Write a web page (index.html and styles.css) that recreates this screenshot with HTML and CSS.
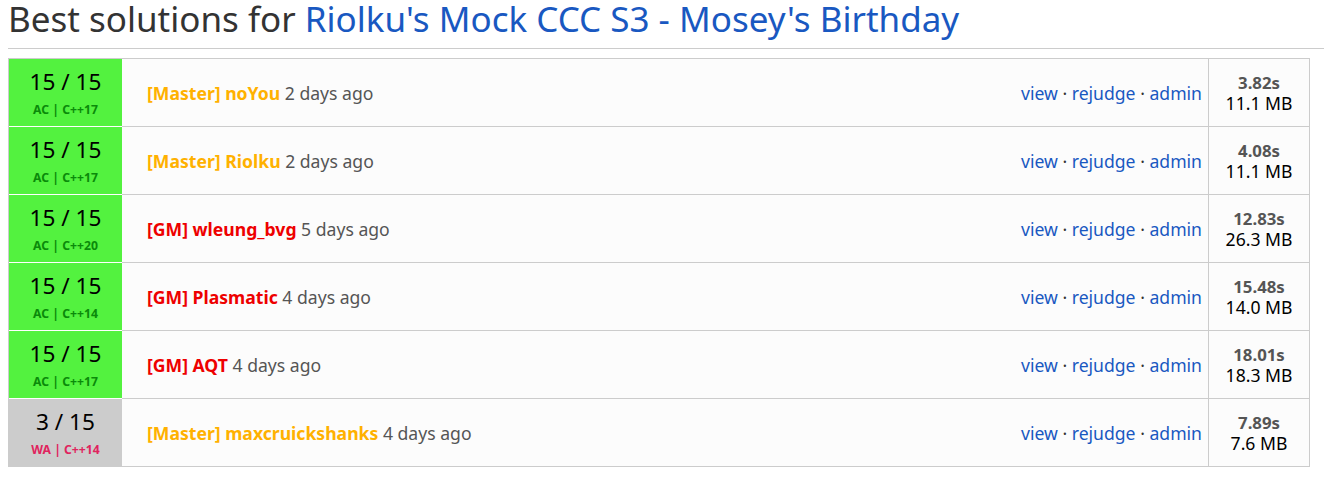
FILE: index.html
```html
<!DOCTYPE html>
<html>
<head>
<meta charset="utf-8">
<link rel="stylesheet" href="styles.css">
</head>
<body>
<h2 class="title">Best solutions for <a href="#">Riolku's Mock CCC S3 - Mosey's Birthday</a></h2>
<hr class="rule">
<div class="submissions">
  <div class="row">
    <div class="result ac"><div class="score">15 / 15</div><div class="state">AC | C++17</div></div>
    <div class="info">
      <div class="who"><span class="user master">[Master] noYou</span> <span class="time">2 days ago</span></div>
      <div class="actions"><a href="#">view</a> · <a href="#">rejudge</a> · <a href="#">admin</a></div>
    </div>
    <div class="res"><div class="t">3.82s</div><div class="m">11.1 MB</div></div>
  </div>
  <div class="row">
    <div class="result ac"><div class="score">15 / 15</div><div class="state">AC | C++17</div></div>
    <div class="info">
      <div class="who"><span class="user master">[Master] Riolku</span> <span class="time">2 days ago</span></div>
      <div class="actions"><a href="#">view</a> · <a href="#">rejudge</a> · <a href="#">admin</a></div>
    </div>
    <div class="res"><div class="t">4.08s</div><div class="m">11.1 MB</div></div>
  </div>
  <div class="row">
    <div class="result ac"><div class="score">15 / 15</div><div class="state">AC | C++20</div></div>
    <div class="info">
      <div class="who"><span class="user gm">[GM] wleung_bvg</span> <span class="time">5 days ago</span></div>
      <div class="actions"><a href="#">view</a> · <a href="#">rejudge</a> · <a href="#">admin</a></div>
    </div>
    <div class="res"><div class="t">12.83s</div><div class="m">26.3 MB</div></div>
  </div>
  <div class="row">
    <div class="result ac"><div class="score">15 / 15</div><div class="state">AC | C++14</div></div>
    <div class="info">
      <div class="who"><span class="user gm">[GM] Plasmatic</span> <span class="time">4 days ago</span></div>
      <div class="actions"><a href="#">view</a> · <a href="#">rejudge</a> · <a href="#">admin</a></div>
    </div>
    <div class="res"><div class="t">15.48s</div><div class="m">14.0 MB</div></div>
  </div>
  <div class="row">
    <div class="result ac"><div class="score">15 / 15</div><div class="state">AC | C++17</div></div>
    <div class="info">
      <div class="who"><span class="user gm">[GM] AQT</span> <span class="time">4 days ago</span></div>
      <div class="actions"><a href="#">view</a> · <a href="#">rejudge</a> · <a href="#">admin</a></div>
    </div>
    <div class="res"><div class="t">18.01s</div><div class="m">18.3 MB</div></div>
  </div>
  <div class="row">
    <div class="result wa"><div class="score">3 / 15</div><div class="state">WA | C++14</div></div>
    <div class="info">
      <div class="who"><span class="user master">[Master] maxcruickshanks</span> <span class="time">4 days ago</span></div>
      <div class="actions"><a href="#">view</a> · <a href="#">rejudge</a> · <a href="#">admin</a></div>
    </div>
    <div class="res"><div class="t">7.89s</div><div class="m">7.6 MB</div></div>
  </div>
</div>
</body>
</html>
```
FILE: styles.css
```css
html, body { margin: 0; padding: 0; background: #fff; }
body {
  padding: 0 0 0 8px;
  font-family: "Noto Sans", "Open Sans", sans-serif;
  color: #000;
}
a { color: #1958c1; text-decoration: none; }
.title {
  margin: 0;
  font-size: 35px;
  font-weight: normal;
  line-height: 38px;
  color: #333;
  white-space: nowrap;
}
.rule {
  margin: 10px 0 9px 0;
  border: 0;
  border-top: 1px solid #ccc;
  height: 0;
}
.submissions {
  width: 1302px;
  border-top: 1px solid #ccc;
}
.row {
  display: flex;
  height: 67px;
  border-bottom: 1px solid #ccc;
  border-left: 1px solid #ccc;
  border-right: 1px solid #ccc;
  background: #fcfcfc;
}
.result {
  width: 113px;
  flex: none;
  display: flex;
  flex-direction: column;
  align-items: center;
  justify-content: center;
  margin-bottom: -1px;
  border-bottom: 1px solid #fff;
}
.row:last-child .result { border-bottom-color: #ccc; }
.result.ac { background: #53f23f; }
.result.wa { background: #ccc; }
.score { font-size: 22.6px; line-height: 26px; color: #000; margin-top: 1px; }
.state { font-size: 12.2px; font-weight: bold; line-height: 16px; margin-top: 7px; }
.ac .state { color: #0a8a0a; }
.wa .state { color: #e0245e; }
.info {
  flex: 1;
  display: flex;
  align-items: center;
  justify-content: space-between;
  padding: 0 6px 0 25px;
  font-size: 17.6px;
}
.user { font-weight: bold; }
.master { color: #ffb100; }
.gm { color: #e00; }
.time { color: #555; }
.actions { color: #333; }
.res {
  width: 100px;
  flex: none;
  border-left: 1px solid #ccc;
  display: flex;
  flex-direction: column;
  align-items: center;
  justify-content: center;
  line-height: 20px;
}
.res .t { font-weight: bold; color: #555; font-size: 16.8px; }
.res .m { color: #000; font-size: 17.6px; }
```
